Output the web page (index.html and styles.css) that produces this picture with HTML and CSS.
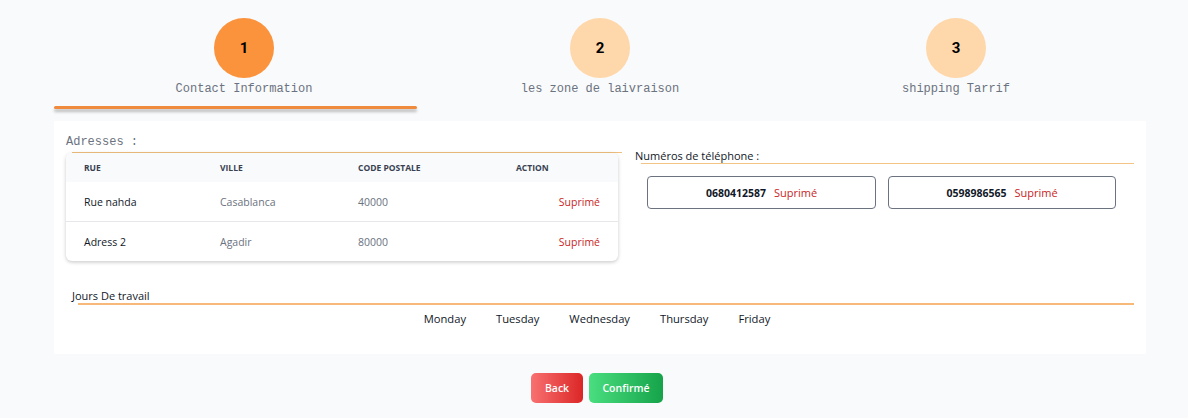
FILE: index.html
```html
<!DOCTYPE html>
<html lang="fr">
<head>
<meta charset="utf-8">
<title>Steps</title>
<link rel="stylesheet" href="styles.css">
</head>
<body>
<div class="page">
  <div class="steps">
    <div class="step">
      <div class="circle active">1</div>
      <div class="step-label">Contact Information</div>
    </div>
    <div class="step">
      <div class="circle">2</div>
      <div class="step-label">les zone de laivraison</div>
    </div>
    <div class="step">
      <div class="circle">3</div>
      <div class="step-label">shipping Tarrif</div>
    </div>
  </div>
  <div class="step-bar"></div>

  <div class="card">
    <div class="top-row">
      <div class="addresses">
        <div class="mono-title">Adresses :</div>
        <div class="rule rule-addr"></div>
        <div class="table-card">
          <table class="tbl">
            <thead>
              <tr><th>Rue</th><th>Ville</th><th>Code postale</th><th>Action</th></tr>
            </thead>
            <tbody>
              <tr class="sep"><td class="strong">Rue nahda</td><td>Casablanca</td><td>40000</td><td class="del">Suprimé</td></tr>
              <tr><td class="strong">Adress 2</td><td>Agadir</td><td>80000</td><td class="del">Suprimé</td></tr>
            </tbody>
          </table>
        </div>
      </div>
      <div class="phones">
        <div class="sec-title">Numéros de téléphone :</div>
        <div class="rule rule-phone"></div>
        <div class="phone-grid">
          <div class="phone-box"><span class="num">0680412587</span><span class="del">Suprimé</span></div>
          <div class="phone-box"><span class="num">0598986565</span><span class="del">Suprimé</span></div>
        </div>
      </div>
    </div>

    <div class="days-section">
      <div class="sec-title jours">Jours De travail</div>
      <div class="rule rule-days"></div>
      <div class="days">
        <span>Monday</span><span>Tuesday</span><span>Wednesday</span><span>Thursday</span><span>Friday</span>
      </div>
    </div>
  </div>

  <div class="actions">
    <button class="btn btn-back">Back</button>
    <button class="btn btn-confirm">Confirmé</button>
  </div>
</div>
</body>
</html>
```

FILE: styles.css
```css
html, body {
  margin: 0;
  padding: 0;
  background: #f9fafb;
  font-family: "Open Sans", "Noto Sans", sans-serif;
  color: #111827;
}

.page {
  margin-left: 54px;
  width: 1092px;
}

.steps {
  display: grid;
  grid-template-columns: repeat(3, 1fr);
  padding: 18px 12px 0;
}

.step {
  display: flex;
  flex-direction: column;
  align-items: center;
}

.circle {
  width: 60px;
  height: 60px;
  border-radius: 50%;
  background: #fed7aa;
  display: flex;
  align-items: center;
  justify-content: center;
  font-family: "Roboto", "Liberation Sans", sans-serif;
  font-weight: 700;
  font-size: 15px;
  color: #000;
}

.circle.active {
  background: #fb923c;
}

.step-label {
  margin-top: 3px;
  font-family: "Liberation Mono", "DejaVu Sans Mono", monospace;
  font-size: 12px;
  line-height: 16px;
  color: #6b7280;
}

.step-bar {
  margin-top: 9px;
  width: 363px;
  height: 3px;
  background: #f08a3c;
  border-radius: 2px;
  box-shadow: 0 3px 3px rgba(0, 0, 0, 0.25);
}

.card {
  margin-top: 12px;
  background: #fff;
  padding: 12px 12px 28px 12px;
}

.top-row {
  display: flex;
  gap: 13px;
}

.addresses {
  width: 556px;
  flex: none;
}

.mono-title {
  font-family: "Liberation Mono", "DejaVu Sans Mono", monospace;
  font-size: 12px;
  line-height: 19px;
  color: #6b7280;
}

.rule {
  height: 1px;
  background: #efc07e;
}

.rule-addr {
  margin-left: 6px;
}

.table-card {
  width: 552px;
  border-radius: 6px;
  box-shadow: 0 1px 4px rgba(0, 0, 0, 0.16), 0 2px 3px rgba(0, 0, 0, 0.06);
  overflow: hidden;
  background: #fff;
}

.tbl {
  width: 100%;
  border-collapse: collapse;
  font-size: 10.5px;
}

.tbl th {
  background: #f9fafb;
  text-align: left;
  text-transform: uppercase;
  font-weight: 700;
  font-size: 8.5px;
  color: #374151;
  height: 29px;
  padding: 0 0 0 18px;
}

.tbl td {
  height: 39px;
  padding: 0 0 0 18px;
  color: #6b7280;
}

.tbl th:nth-child(1), .tbl td:nth-child(1) { width: 118px; }
.tbl th:nth-child(2), .tbl td:nth-child(2) { width: 120px; }
.tbl th:nth-child(3), .tbl td:nth-child(3) { width: 140px; }

.tbl td.strong {
  color: #111827;
}

.tbl td.del {
  text-align: right;
  padding-right: 18px;
  color: #c81e1e;
}

.tbl tr.sep td {
  border-bottom: 1px solid #e5e7eb;
}

.del {
  color: #c81e1e;
}

.phones {
  flex: 1;
  padding-top: 15px;
}

.sec-title {
  font-size: 11px;
  line-height: 15px;
  color: #111827;
}

.rule-phone {
  margin-left: 6px;
  background: #f2c587;
}

.phone-grid {
  display: grid;
  grid-template-columns: 229px 228px;
  gap: 12px;
  margin-top: 12px;
  padding-left: 12px;
}

.phone-box {
  height: 31px;
  border: 1px solid #6b7280;
  border-radius: 4px;
  display: flex;
  align-items: center;
  justify-content: center;
  gap: 8px;
  font-size: 11px;
}

.phone-box .num {
  font-weight: 700;
  font-size: 10.5px;
  color: #111827;
}

.days-section {
  margin-top: 28px;
}

.jours {
  margin-left: 6px;
  line-height: 14px;
}

.rule-days {
  margin-left: 12px;
  height: 2px;
  background: #f7b97a;
}

.days {
  display: flex;
  justify-content: center;
  gap: 30px;
  margin-top: 6px;
  font-size: 11.2px;
  line-height: 15px;
  color: #111827;
  padding-right: 6px;
}

.actions {
  display: flex;
  justify-content: center;
  gap: 6px;
  margin-top: 19px;
  padding-right: 6px;
}

.btn {
  height: 30px;
  border: none;
  border-radius: 5px;
  color: #fff;
  font-family: "Open Sans", "Noto Sans", sans-serif;
  font-weight: 600;
  font-size: 10.5px;
  padding: 0;
  cursor: pointer;
}

.btn-back {
  width: 52px;
  background: linear-gradient(90deg, #f87171, #dc2626);
}

.btn-confirm {
  width: 74px;
  background: linear-gradient(90deg, #4ade80, #16a34a);
}
```
